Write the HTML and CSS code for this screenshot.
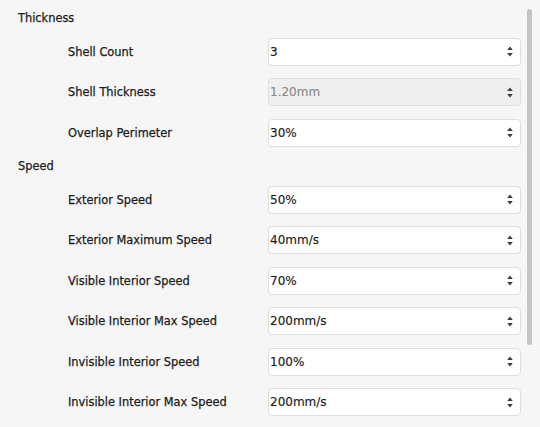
FILE: index.html
```html
<!DOCTYPE html>
<html>
<head>
<meta charset="utf-8">
<link rel="stylesheet" href="styles.css">
</head>
<body>
<div class="panel">
  <div class="section">Thickness</div>
  <div class="row"><div class="label">Shell Count</div><div class="field"><span class="val">3</span><svg class="spin" width="6" height="11" viewBox="0 0 6 11"><path d="M3 0.5 L5.8 4 L0.2 4 Z M3 10.5 L5.8 7 L0.2 7 Z"/></svg></div></div>
  <div class="row"><div class="label">Shell Thickness</div><div class="field disabled"><span class="val">1.20mm</span><svg class="spin" width="6" height="11" viewBox="0 0 6 11"><path d="M3 0.5 L5.8 4 L0.2 4 Z M3 10.5 L5.8 7 L0.2 7 Z"/></svg></div></div>
  <div class="row"><div class="label">Overlap Perimeter</div><div class="field"><span class="val">30%</span><svg class="spin" width="6" height="11" viewBox="0 0 6 11"><path d="M3 0.5 L5.8 4 L0.2 4 Z M3 10.5 L5.8 7 L0.2 7 Z"/></svg></div></div>
  <div class="section">Speed</div>
  <div class="row"><div class="label">Exterior Speed</div><div class="field"><span class="val">50%</span><svg class="spin" width="6" height="11" viewBox="0 0 6 11"><path d="M3 0.5 L5.8 4 L0.2 4 Z M3 10.5 L5.8 7 L0.2 7 Z"/></svg></div></div>
  <div class="row"><div class="label">Exterior Maximum Speed</div><div class="field"><span class="val">40mm/s</span><svg class="spin" width="6" height="11" viewBox="0 0 6 11"><path d="M3 0.5 L5.8 4 L0.2 4 Z M3 10.5 L5.8 7 L0.2 7 Z"/></svg></div></div>
  <div class="row"><div class="label">Visible Interior Speed</div><div class="field"><span class="val">70%</span><svg class="spin" width="6" height="11" viewBox="0 0 6 11"><path d="M3 0.5 L5.8 4 L0.2 4 Z M3 10.5 L5.8 7 L0.2 7 Z"/></svg></div></div>
  <div class="row"><div class="label">Visible Interior Max Speed</div><div class="field"><span class="val">200mm/s</span><svg class="spin" width="6" height="11" viewBox="0 0 6 11"><path d="M3 0.5 L5.8 4 L0.2 4 Z M3 10.5 L5.8 7 L0.2 7 Z"/></svg></div></div>
  <div class="row"><div class="label">Invisible Interior Speed</div><div class="field"><span class="val">100%</span><svg class="spin" width="6" height="11" viewBox="0 0 6 11"><path d="M3 0.5 L5.8 4 L0.2 4 Z M3 10.5 L5.8 7 L0.2 7 Z"/></svg></div></div>
  <div class="row"><div class="label">Invisible Interior Max Speed</div><div class="field"><span class="val">200mm/s</span><svg class="spin" width="6" height="11" viewBox="0 0 6 11"><path d="M3 0.5 L5.8 4 L0.2 4 Z M3 10.5 L5.8 7 L0.2 7 Z"/></svg></div></div>
</div>
<div class="scrollbar"></div>
</body>
</html>
```
FILE: styles.css
```css
html, body {
  margin: 0;
  padding: 0;
  background: #f6f6f6;
  height: 100%;
  overflow: hidden;
}
body {
  font-family: "DejaVu Sans", Verdana, sans-serif;
  color: #1a1a1a;
  position: relative;
}
.panel {
  display: flex;
  flex-direction: column;
  gap: 12.5px;
  padding: 11px 0 0 18px;
}
.section {
  font-size: 11.4px;
  line-height: 14px;
  height: 14px;
  -webkit-text-stroke: 0.25px #1a1a1a;
}
.row {
  display: grid;
  grid-template-columns: 250px 253px;
  align-items: center;
  height: 28px;
}
.label {
  padding-left: 50px;
  font-size: 11.4px;
  line-height: 14px;
  white-space: nowrap;
  -webkit-text-stroke: 0.25px #1a1a1a;
}
.field {
  box-sizing: border-box;
  height: 28px;
  background: #ffffff;
  border: 1px solid #dedede;
  border-radius: 4px;
  display: flex;
  align-items: center;
  justify-content: space-between;
  padding: 0 7px 0 1px;
  font-size: 12px;
  color: #1a1a1a;
}
.val {
  -webkit-text-stroke: 0.15px currentColor;
}
.field.disabled {
  background: #efefef;
  color: #8a8a8a;
}
.spin {
  fill: #3a3a3a;
  display: block;
}
.scrollbar {
  position: absolute;
  left: 527px;
  top: 9px;
  width: 5px;
  height: 336px;
  border-radius: 3px;
  background: #c4c4c4;
}
```
